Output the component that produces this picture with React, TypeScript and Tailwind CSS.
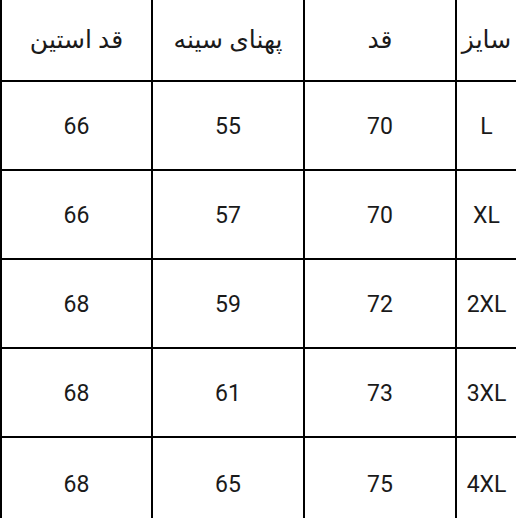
const HEAD = ["قد استین", "پهنای سینه", "قد", "سایز"];
const ROWS = [
  ["66", "55", "70", "L"],
  ["66", "57", "70", "XL"],
  ["68", "59", "72", "2XL"],
  ["68", "61", "73", "3XL"],
  ["68", "65", "75", "4XL"],
];

export default function App() {
  const cell = "flex items-center justify-center bg-white text-[#1a1a1a]";
  return (
    <div className="h-[518px] w-[518px] overflow-hidden bg-white" style={{ fontFamily: 'Roboto, "DejaVu Sans", sans-serif' }}>
      <div className="grid w-[516px] grid-cols-[149px_150px_150px_59px] grid-rows-[80px_87px_87px_87px_87px_90px] gap-[2px] bg-black pl-[2px]">
        {HEAD.map((h) => (
          <div key={h} className={cell + " text-[25px]"} dir="rtl">{h}</div>
        ))}
        {ROWS.map((r) => r.map((v, i) => <div key={r[3] + i} className={cell + " pt-[4px] text-[23px]"}>{v}</div>))}
      </div>
    </div>
  );
}
